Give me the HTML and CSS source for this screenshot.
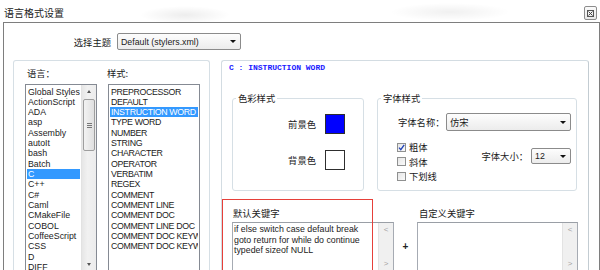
FILE: index.html
```html
<!DOCTYPE html>
<html lang="zh-CN">
<head>
<meta charset="utf-8">
<title>语言格式设置</title>
<link rel="stylesheet" href="styles.css">
</head>
<body>
<div class="titlebar">
  <span class="title">语言格式设置</span>
  <span class="close"><svg width="7" height="7" viewBox="0 0 7 7"><rect x="0.5" y="0.5" width="6" height="6" fill="none" stroke="#555" stroke-width="1"/><path d="M1.5 1.5 L5.5 5.5 M5.5 1.5 L1.5 5.5" stroke="#444" stroke-width="1"/></svg></span>
</div>
<div class="window">
  <div class="theme-row">
    <span class="theme-label">选择主题</span>
    <div class="combo theme-combo"><span class="combo-text">Default (stylers.xml)</span><i class="arrow"></i></div>
  </div>
  <div class="main">
    <div class="lists">
      <div class="col">
        <div class="cap cap-lang">语言：</div>
        <div class="listbox">
          <ul class="items">
            <li>Global Styles</li>
            <li>ActionScript</li>
            <li>ADA</li>
            <li>asp</li>
            <li>Assembly</li>
            <li>autoIt</li>
            <li>bash</li>
            <li>Batch</li>
            <li class="sel">C</li>
            <li>C++</li>
            <li>C#</li>
            <li>Caml</li>
            <li>CMakeFile</li>
            <li>COBOL</li>
            <li>CoffeeScript</li>
            <li>CSS</li>
            <li>D</li>
            <li>DIFF</li>
          </ul>
          <div class="vscroll">
            <i class="sb-up"></i>
            <div class="thumb"><span class="grip"></span></div>
            <i class="sb-down"></i>
          </div>
        </div>
      </div>
      <div class="col">
        <div class="cap cap-style">样式:</div>
        <div class="listbox">
          <ul class="items caps">
            <li>PREPROCESSOR</li>
            <li>DEFAULT</li>
            <li class="sel">INSTRUCTION WORD</li>
            <li>TYPE WORD</li>
            <li>NUMBER</li>
            <li>STRING</li>
            <li>CHARACTER</li>
            <li>OPERATOR</li>
            <li>VERBATIM</li>
            <li>REGEX</li>
            <li>COMMENT</li>
            <li>COMMENT LINE</li>
            <li>COMMENT DOC</li>
            <li>COMMENT LINE DOC</li>
            <li>COMMENT DOC KEYWORD</li>
            <li>COMMENT DOC KEYWORD ERROR</li>
          </ul>
        </div>
      </div>
    </div>
    <div class="panel">
      <div class="head">C : INSTRUCTION WORD</div>
      <div class="groups">
        <fieldset class="box box-color">
          <legend>色彩样式</legend>
          <div class="color-rows">
            <div class="color-row"><span>前景色</span><span class="swatch fg"></span></div>
            <div class="color-row"><span>背景色</span><span class="swatch bg"></span></div>
          </div>
        </fieldset>
        <fieldset class="box box-font">
          <legend>字体样式</legend>
          <div class="font-inner">
            <div class="font-name">
              <span>字体名称：</span>
              <div class="combo name-combo"><span class="combo-text">仿宋</span><i class="arrow"></i></div>
            </div>
            <div class="font-lower">
              <div class="checks">
                <div class="check"><span class="cb"><svg width="9" height="9" viewBox="0 0 9 9"><path d="M2 4.6 L3.8 6.6 L7.2 1.8" fill="none" stroke="#2546b8" stroke-width="1.4"/></svg></span><span>粗体</span></div>
                <div class="check"><span class="cb"></span><span>斜体</span></div>
                <div class="check"><span class="cb"></span><span>下划线</span></div>
              </div>
              <div class="font-size">
                <span>字体大小：</span>
                <div class="combo size-combo"><span class="combo-text">12</span><i class="arrow"></i></div>
              </div>
            </div>
          </div>
        </fieldset>
      </div>
      <div class="keywords">
        <div class="kw kw-default">
          <div class="kw-cap">默认关键字</div>
          <div class="textarea">
            <div class="ta-text">if else switch case default break<br>goto return for while do continue<br>typedef sizeof NULL</div>
            <div class="ta-scroll"><span class="chev">&#706;</span><span class="chev">&#707;</span></div>
          </div>
        </div>
        <div class="plus">+</div>
        <div class="kw kw-custom">
          <div class="kw-cap">自定义关键字</div>
          <div class="textarea">
            <div class="ta-text"></div>
            <div class="ta-scroll"><span class="chev">&#706;</span><span class="chev">&#707;</span></div>
          </div>
        </div>
      </div>
      <div class="annot"></div>
    </div>
  </div>
</div>
</body>
</html>
```
FILE: styles.css
```css
* { box-sizing: border-box; }
html, body { margin: 0; padding: 0; }
body {
  width: 600px;
  height: 270px;
  overflow: hidden;
  background: #fff;
  font-family: "Liberation Sans", "Noto Sans CJK SC", sans-serif;
  font-size: 8.8px;
  color: #1b1b1b;
}
.titlebar {
  height: 22px;
  display: flex;
  justify-content: space-between;
  align-items: flex-start;
  padding: 0 3px 0 4px;
  background:
    radial-gradient(ellipse 45px 9px at 185px 15px, rgba(0,0,0,0.07), rgba(0,0,0,0) 100%),
    radial-gradient(ellipse 60px 9px at 450px 12px, rgba(0,0,0,0.06), rgba(0,0,0,0) 100%),
    #fff;
}
.title {
  font-family: "Noto Sans CJK SC", sans-serif;
  font-size: 10px;
  line-height: 14px;
  margin-top: 6px;
  color: #222;
}
.close {
  width: 13px;
  height: 14px;
  margin-top: 6px;
  border: 1px solid #8d8d8d;
  border-radius: 2px;
  background: linear-gradient(#fbfbfb, #e9e9e9);
  display: flex;
  align-items: center;
  justify-content: center;
}
.window {
  margin-left: 3px;
  width: 597px;
  height: 248px;
  overflow: hidden;
  border: 1px solid #7e7e7e;
  border-bottom: none;
}
.theme-row {
  display: grid;
  grid-template-columns: 113px 124px;
  align-items: center;
  margin-top: 10px;
  height: 17px;
}
.theme-label {
  font-family: "Noto Sans CJK SC", sans-serif;
  font-size: 9.3px;
  text-align: right;
  padding-right: 6px;
}
.combo {
  height: 17px;
  border: 1px solid #8b8b8b;
  border-radius: 2px;
  background: linear-gradient(#fdfdfd, #ececec);
  display: flex;
  align-items: center;
  justify-content: space-between;
  padding: 0 4px 0 3px;
}
.combo-text { line-height: 12px; }
.arrow {
  width: 0;
  height: 0;
  border-left: 3px solid transparent;
  border-right: 3px solid transparent;
  border-top: 3px solid #111;
}
.main {
  display: flex;
  gap: 11px;
  margin-top: 10px;
  padding-left: 9px;
}
.lists {
  width: 197px;
  height: 210px;
  border: 1px solid #d6dfe5;
  border-bottom: none;
  border-radius: 3px 3px 0 0;
  padding: 6px 0 0 11px;
  display: grid;
  grid-template-columns: 72px 92px;
  column-gap: 11px;
  align-content: start;
}
.cap {
  font-family: "Noto Sans CJK SC", sans-serif;
  font-size: 9.3px;
  line-height: 12px;
  height: 12px;
  margin-bottom: 5px;
}
.cap-lang { padding-left: 2px; }
.cap-style { margin-left: -1px; }
.listbox {
  height: 186px;
  border: 1px solid #858a93;
  border-bottom: none;
  display: flex;
  overflow: hidden;
  background: #fff;
}
.items {
  flex: 1;
  min-width: 0;
  list-style: none;
  margin: 0;
  padding: 1.5px 1px 0 1px;
}
.items li {
  height: 10.33px;
  line-height: 10.33px;
  padding-left: 1px;
  white-space: nowrap;
  overflow: hidden;
}
.items.caps li { letter-spacing: -0.35px; }
.items li.sel {
  background: #3399ff;
  color: #fff;
}
.vscroll {
  width: 15px;
  background: linear-gradient(90deg, #e6e6e6, #f1f1f1 40%, #ececec);
  border-left: 1px solid #e2e2e2;
  display: flex;
  flex-direction: column;
  align-items: center;
  padding-top: 5px;
}
.sb-up, .sb-down {
  width: 0;
  height: 0;
  border-left: 2.5px solid transparent;
  border-right: 2.5px solid transparent;
}
.sb-up { border-bottom: 3px solid #555; }
.sb-down { border-top: 3px solid #555; margin-top: auto; margin-bottom: 4px; }
.thumb {
  width: 12px;
  height: 52px;
  margin-top: 6px;
  border: 1px solid #9e9e9e;
  border-radius: 2px;
  background: linear-gradient(90deg, #f2f2f2, #e0e0e0);
  display: flex;
  align-items: center;
  justify-content: center;
}
.grip {
  width: 5px;
  height: 5px;
  border-top: 1px solid #777;
  border-bottom: 1px solid #777;
}
.grip::after {
  content: "";
  display: block;
  margin-top: 1px;
  border-top: 1px solid #777;
}
.panel {
  position: relative;
  width: 368px;
  height: 210px;
  border: 1px solid #d3dce2;
  border-right-color: #c3ccd2;
  border-bottom: none;
  border-radius: 3px 3px 0 0;
  padding-left: 10px;
}
.head {
  font-family: "Liberation Mono", monospace;
  font-weight: bold;
  font-size: 8px;
  line-height: 10px;
  color: #1a1aff;
  margin: 2px 0 0 -3px;
}
.groups {
  display: flex;
  gap: 13px;
  margin-top: 19px;
}
.box {
  margin: 0;
  padding: 0;
  min-width: 0;
  height: 99px;
  border: 1px solid #d6dfe5;
  border-radius: 3px;
}
.box legend {
  font-family: "Noto Sans CJK SC", sans-serif;
  font-size: 9.3px;
  line-height: 12px;
  padding: 0 2px;
  margin-left: 3px;
}
.box-color { width: 132px; }
.box-font { width: 200px; }
.color-rows {
  display: flex;
  flex-direction: column;
  gap: 16px;
  padding: 10px 18px 0 0;
}
.color-row {
  display: flex;
  justify-content: flex-end;
  align-items: center;
  gap: 9px;
  font-family: "Noto Sans CJK SC", sans-serif;
  font-size: 9.3px;
}
.swatch {
  width: 20px;
  height: 20px;
  border: 1px solid #2e2e2e;
}
.swatch.fg { background: #0000ff; }
.swatch.bg { background: #fff; }
.font-inner {
  padding: 9px 5px 0 19px;
  font-family: "Noto Sans CJK SC", sans-serif;
  font-size: 9.3px;
}
.font-name {
  display: flex;
  justify-content: space-between;
  align-items: center;
  padding-left: 1px;
}
.name-combo { width: 125px; height: 18px; font-size: 9.3px; }
.font-lower {
  display: flex;
  justify-content: space-between;
  margin-top: 9px;
}
.check {
  display: flex;
  align-items: center;
  gap: 3px;
  height: 14.5px;
}
.cb {
  width: 9px;
  height: 9px;
  border: 1px solid #8f9090;
  background: linear-gradient(135deg, #e6e6e6, #fafafa);
  display: flex;
  align-items: center;
  justify-content: center;
}
.cb svg { display: block; margin: -1px; }
.font-size {
  display: flex;
  align-items: center;
  gap: 3px;
  margin-top: 8px;
  align-self: flex-start;
}
.size-combo {
  width: 40px;
  height: 16px;
  font-family: "Liberation Sans", sans-serif;
  font-size: 8.8px;
}
.keywords {
  display: flex;
  margin-top: 16px;
}
.kw-cap {
  font-family: "Noto Sans CJK SC", sans-serif;
  font-size: 9.3px;
  line-height: 12px;
  height: 12px;
  margin-bottom: 3px;
}
.kw-default { width: 162px; }
.kw-default .kw-cap { padding-left: 1px; }
.kw-custom { width: 161px; }
.kw-custom .kw-cap { padding-left: 2px; }
.plus {
  width: 23px;
  text-align: center;
  font-size: 10px;
  font-weight: bold;
  line-height: 12px;
  margin-top: 34px;
  color: #222;
}
.textarea {
  height: 48px;
  border: 1px solid #a6abb3;
  border-top-color: #9a9fa6;
  border-bottom: none;
  display: flex;
  background: #fff;
}
.ta-text {
  flex: 1;
  padding: 1px 0 0 1px;
  line-height: 10.5px;
  white-space: nowrap;
}
.ta-scroll {
  width: 15px;
  background: #f0f0f0;
  border-left: 1px solid #e3e3e3;
  display: flex;
  flex-direction: column;
  align-items: center;
  color: #a3a3a3;
  font-size: 8px;
  line-height: 10px;
  padding-top: 2px;
}
.ta-scroll .chev:last-child { margin-top: auto; margin-bottom: 1px; }
.annot {
  position: absolute;
  left: 0;
  top: 138px;
  width: 151px;
  height: 72px;
  border: 1px solid #e6403a;
  border-bottom: none;
  pointer-events: none;
}
```
